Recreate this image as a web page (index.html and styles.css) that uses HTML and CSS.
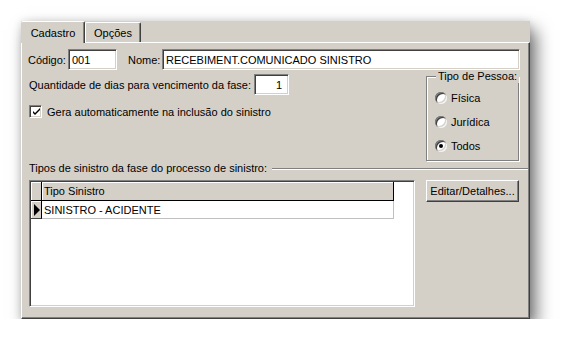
FILE: index.html
```html
<!DOCTYPE html>
<html lang="pt">
<head>
  <meta charset="UTF-8">
  <title>Cadastro de Fase</title>
  <link rel="stylesheet" href="styles.css">
</head>
<body>
  <div class="window">
    <!-- Tabs -->
    <div class="tabs">
      <div class="tab active">Cadastro</div>
      <div class="tab tab-opcoes">Opções</div>
    </div>

    <!-- Tab page -->
    <div class="page">
      <div class="row-top">
        <span class="lbl lbl-codigo">Código:</span>
        <div class="edit edit-codigo">001</div>
        <span class="lbl lbl-nome">Nome:</span>
        <div class="edit edit-nome">RECEBIMENT.COMUNICADO SINISTRO</div>
      </div>

      <div class="row-mid">
        <div class="mid-left">
          <div class="row-dias">
            <span class="lbl-dias">Quantidade de dias para vencimento da fase:</span>
            <div class="edit edit-dias">1</div>
          </div>
          <div class="check-row">
            <span class="checkbox">
              <svg width="9" height="9" viewBox="0 0 9 9">
                <path d="M1 3 L1 5 L3 7 L8 2 L8 0 L3 5 Z" fill="#000"/>
              </svg>
            </span>
            <span>Gera automaticamente na inclusão do sinistro</span>
          </div>
        </div>

        <div class="group-pessoa">
          <span class="group-title">Tipo de Pessoa:</span>
          <div class="radio-row"><span class="radio"></span>Física</div>
          <div class="radio-row"><span class="radio"></span>Jurídica</div>
          <div class="radio-row"><span class="radio checked"></span>Todos</div>
        </div>
      </div>

      <div class="section-title">
        <span>Tipos de sinistro da fase do processo de sinistro:</span>
        <span class="etched"></span>
      </div>

      <div class="row-bottom">
        <div class="grid">
          <div class="grid-row grid-head">
            <div class="ind"></div>
            <div class="cell">Tipo Sinistro</div>
          </div>
          <div class="grid-row grid-data">
            <div class="ind"><span class="arrow"></span></div>
            <div class="cell">SINISTRO - ACIDENTE</div>
          </div>
        </div>
        <button class="btn">Editar/Detalhes...</button>
      </div>
    </div>
  </div>
</body>
</html>
```

FILE: styles.css
```css
body {
  margin: 0;
  background-color: #fff;
  font-family: "Liberation Sans", Arial, sans-serif;
  font-size: 11px;
  color: #000;
}
.window {
  margin: 21px 0 0 21px;
  width: 509px;
  height: 298px;
  background-color: #d4d0c8;
  display: flex;
  flex-direction: column;
  box-shadow: 6px 9px 16px rgba(0, 0, 0, 0.55), 0 0 8px rgba(0, 0, 0, 0.12);
}

/* Tabs */
.tabs {
  display: flex;
  align-items: flex-end;
  height: 21px;
}
.tab {
  height: 18px;
  width: 54px;
  display: flex;
  align-items: center;
  justify-content: center;
  border-top: 1px solid #fff;
  border-left: 1px solid #fff;
  border-right: 1px solid #404040;
  box-shadow: inset -1px 0 #808080;
  border-radius: 2px 2px 0 0;
  box-sizing: content-box;
}
.tab.active {
  width: 62px;
  height: 21px;
  margin-bottom: -1px;
  position: relative;
  z-index: 1;
  background-color: #d4d0c8;
  border-left: none;
  padding-left: 1px;
}
.tab-opcoes {
  padding-top: 1px;
}

/* Tab page */
.page {
  flex: 1;
  border-top: 1px solid #fff;
  border-left: 1px solid #fff;
  border-right: 1px solid #404040;
  border-bottom: 1px solid #404040;
  box-shadow: inset -1px -1px #808080;
  padding: 6px 9px 0 6px;
}

.edit {
  background-color: #fff;
  border: 1px solid;
  border-color: #808080 #fff #fff #808080;
  box-shadow: inset 1px 1px #404040, inset -1px -1px #d4d0c8;
  height: 21px;
  box-sizing: border-box;
  display: flex;
  align-items: center;
  padding-left: 3px;
  white-space: nowrap;
}

.row-top {
  display: flex;
  align-items: center;
  height: 21px;
}
.lbl-codigo {
  width: 40px;
}
.edit-codigo {
  width: 49px;
}
.lbl-nome {
  width: 34px;
  margin-left: 11px;
}
.edit-nome {
  flex: 1;
}

.row-mid {
  display: flex;
}
.mid-left {
  flex: 1;
}
.row-dias {
  display: flex;
  align-items: center;
  margin-top: 4px;
}
.lbl-dias {
  width: 225px;
  padding-left: 1px;
  white-space: nowrap;
}
.edit-dias {
  width: 35px;
  justify-content: flex-end;
  padding-right: 6px;
}
.check-row {
  display: flex;
  align-items: center;
  margin-top: 10px;
  height: 13px;
}
.checkbox {
  width: 13px;
  height: 13px;
  box-sizing: border-box;
  margin-left: 1px;
  margin-right: 5px;
  background-color: #fff;
  border: 1px solid;
  border-color: #808080 #fff #fff #808080;
  box-shadow: inset 1px 1px #404040, inset -1px -1px #d4d0c8;
  display: flex;
  align-items: center;
  justify-content: center;
  padding: 1px 0 0 1px;
}

/* Group box */
.group-pessoa {
  position: relative;
  width: 93px;
  height: 85px;
  box-sizing: border-box;
  margin: 6px 1px 0 0;
  border: 1px solid #808080;
  box-shadow: inset 1px 1px #fff, 1px 1px #fff;
  padding: 9px 0 0 8px;
}
.group-title {
  position: absolute;
  top: -7px;
  left: 9px;
  padding: 0 2px;
  line-height: 13px;
  white-space: nowrap;
  background-color: #d4d0c8;
}
.radio-row {
  display: flex;
  align-items: center;
  height: 24px;
}
.radio {
  position: relative;
  width: 12px;
  height: 12px;
  border-radius: 50%;
  margin-right: 4px;
  background-color: #fff;
  box-shadow: inset 1px 1px 0 #808080, inset -1px -1px 0 #f4f4f4, inset 2px 2px 0 #404040, inset -2px -2px 0 #d4d0c8;
}
.radio.checked::after {
  content: "";
  position: absolute;
  left: 4px;
  top: 4px;
  width: 4px;
  height: 4px;
  border-radius: 50%;
  background-color: #000;
}

.section-title {
  display: flex;
  align-items: center;
  line-height: 13px;
  margin-top: 1px;
  padding-left: 1px;
}
.etched {
  flex: 1;
  height: 0;
  border-top: 1px solid #808080;
  border-bottom: 1px solid #fff;
  margin: 1px -8px 0 5px;
}

/* Grid */
.row-bottom {
  display: flex;
  align-items: flex-start;
  margin-top: 5px;
}
.grid {
  width: 386px;
  height: 127px;
  box-sizing: border-box;
  margin-left: 1px;
  background-color: #fff;
  border: 1px solid;
  border-color: #808080 #fff #fff #808080;
  box-shadow: inset 1px 1px #404040, inset -1px -1px #d4d0c8;
  padding: 1px;
}
.grid-row {
  display: flex;
  height: 19px;
}
.grid-row .ind {
  width: 11px;
  background-color: #d4d0c8;
  border-right: 1px solid #000;
  border-bottom: 1px solid #000;
  box-shadow: inset 1px 1px #fff;
  display: flex;
  align-items: center;
  padding-left: 2px;
  box-sizing: border-box;
}
.grid-head .cell {
  width: 352px;
  background-color: #d4d0c8;
  border-right: 1px solid #000;
  border-bottom: 1px solid #000;
  box-shadow: inset 1px 1px #fff;
  display: flex;
  align-items: center;
  padding-left: 2px;
  box-sizing: border-box;
}
.grid-data {
  height: 18px;
}
.grid-data .ind {
  border-bottom-color: #404040;
}
.grid-data .cell {
  width: 352px;
  border-right: 1px solid #c0c0c0;
  border-bottom: 1px solid #c0c0c0;
  display: flex;
  align-items: center;
  padding-left: 2px;
  box-sizing: border-box;
}
.arrow {
  width: 0;
  height: 0;
  border-left: 6px solid #000;
  border-top: 6px solid transparent;
  border-bottom: 6px solid transparent;
  margin-left: 1px;
}

.btn {
  margin-left: 11px;
  width: 93px;
  height: 22px;
  font-family: inherit;
  font-size: 11px;
  color: #000;
  background-color: #d4d0c8;
  border: 1px solid;
  border-color: #fff #404040 #404040 #fff;
  box-shadow: inset -1px -1px #808080;
  padding: 0;
}
```
